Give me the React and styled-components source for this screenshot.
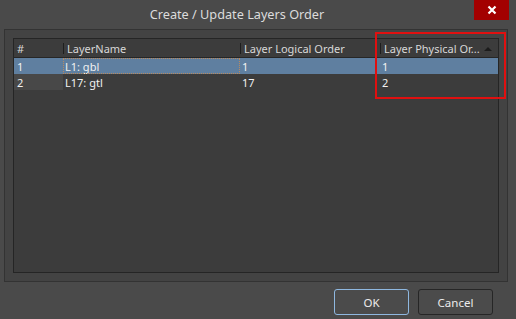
import React from 'react';
import styled, { createGlobalStyle } from 'styled-components';

const Global = createGlobalStyle`
  html, body { margin: 0; padding: 0; background: #4a4a4a; }
  body { font-family: "Noto Sans", "Open Sans", sans-serif; color: #e8e8e8; }
`

const Dialog = styled.div`
  position: relative;
  width: 516px;
  height: 319px;
  background: #4a4a4a;
  display: flex;
  flex-direction: column;
  overflow: hidden;
`

const TitleBar = styled.div`
  height: 20px;
  display: flex;
  align-items: center;
  padding-right: 7px;
`

const Title = styled.div`
  flex: 1;
  text-align: center;
  font-size: 12.7px;
  color: #dcdcdc;
  padding-top: 8px;
`

const CloseBtn = styled.div`
  width: 35px;
  height: 20px;
  background: #a30000;
  display: flex;
  align-items: center;
  justify-content: center;
`

const Body = styled.div`
  padding: 9px 8px 0 4px;
`

const Panel = styled.div`
  height: 253px;
  background: #434343;
  border: 1px solid #333;
  box-sizing: border-box;
  padding: 8px 8px 8px 8px;
`

const Table = styled.div`
  height: 100%;
  box-sizing: border-box;
  background: #3c3c3c;
  border: 1px solid #252525;
  font-size: 11px;
`

const Row = styled.div`
  display: grid;
  grid-template-columns: 49px 177px 140px 1fr;
  height: ${p => (p.$header ? '18px' : '16px')};
  background: ${p => (p.$selected ? '#5f7fa0' : 'transparent')};
  border-bottom: ${p => (p.$header ? '1px solid #262626' : 'none')};
  color: ${p => (p.$header ? '#d8d8d8' : '#f2f2f2')};
`

const HeadCell = styled.div`
  display: flex;
  align-items: center;
  padding-top: 1px;
`

const Sep = styled.span`
  width: 1px;
  height: 11px;
  background: #1e1e1e;
  margin-right: 3px;
`

const HeadText = styled.span`
  flex: 1;
  padding-left: ${p => (p.$first ? '3px' : '0')};
  white-space: nowrap;
  overflow: hidden;
`

const SortArrow = styled.span`
  width: 0;
  height: 0;
  border-left: 4px solid transparent;
  border-right: 4px solid transparent;
  border-bottom: 4px solid #1c1c1c;
  margin-right: 6px;
`

const Cell = styled.div`
  display: flex;
  align-items: center;
  padding-left: ${p => (p.$first ? '3px' : '2px')};
  background: ${p => (p.$shade ? '#484848' : 'transparent')};
  outline: ${p => (p.$focus ? '1px dotted #b98a5e' : 'none')};
  outline-offset: -1px;
`

const Footer = styled.div`
  display: flex;
  justify-content: flex-end;
  gap: 9px;
  padding: 7px 23px 0 0;
`

const Button = styled.button`
  width: 75px;
  height: 26px;
  box-sizing: border-box;
  border-radius: 3px;
  background: #4b4b4b;
  border: 1px solid ${p => (p.$primary ? '#8fb8e0' : '#262626')};
  color: #ececec;
  font-family: "Noto Sans", "Open Sans", sans-serif;
  font-size: 11.5px;
  padding: 0;
`

const Highlight = styled.div`
  position: absolute;
  left: 375px;
  top: 32px;
  width: 131px;
  height: 67px;
  box-sizing: border-box;
  border: 2px solid #e01010;
  pointer-events: none;
`

const layers = [
  { id: 1, name: 'L1: gbl', logical: 1, physical: 1 },
  { id: 2, name: 'L17: gtl', logical: 17, physical: 2 },
]

export default function App() {
  return (
    <>
      <Global />
      <Dialog>
        <TitleBar>
          <Title>Create / Update Layers Order</Title>
          <CloseBtn>
            <svg width="10" height="10" viewBox="0 0 10 10">
              <path d="M1.5 1.5 L8.5 8.5 M8.5 1.5 L1.5 8.5" stroke="#fff" strokeWidth="2.2" />
            </svg>
          </CloseBtn>
        </TitleBar>
        <Body>
          <Panel>
            <Table>
              <Row $header>
                <HeadCell><HeadText $first>#</HeadText></HeadCell>
                <HeadCell><Sep /><HeadText>LayerName</HeadText></HeadCell>
                <HeadCell><Sep /><HeadText>Layer Logical Order</HeadText></HeadCell>
                <HeadCell><Sep /><HeadText>Layer Physical Or...</HeadText><SortArrow /></HeadCell>
              </Row>
              {layers.map((l, i) => (
                <Row key={l.id} $selected={i === 0}>
                  <Cell $first $shade={i !== 0}>{l.id}</Cell>
                  <Cell $focus={i === 0}>{l.name}</Cell>
                  <Cell>{l.logical}</Cell>
                  <Cell>{l.physical}</Cell>
                </Row>
              ))}
            </Table>
          </Panel>
        </Body>
        <Footer>
          <Button $primary>OK</Button>
          <Button>Cancel</Button>
        </Footer>
        <Highlight />
      </Dialog>
    </>
  )
}
